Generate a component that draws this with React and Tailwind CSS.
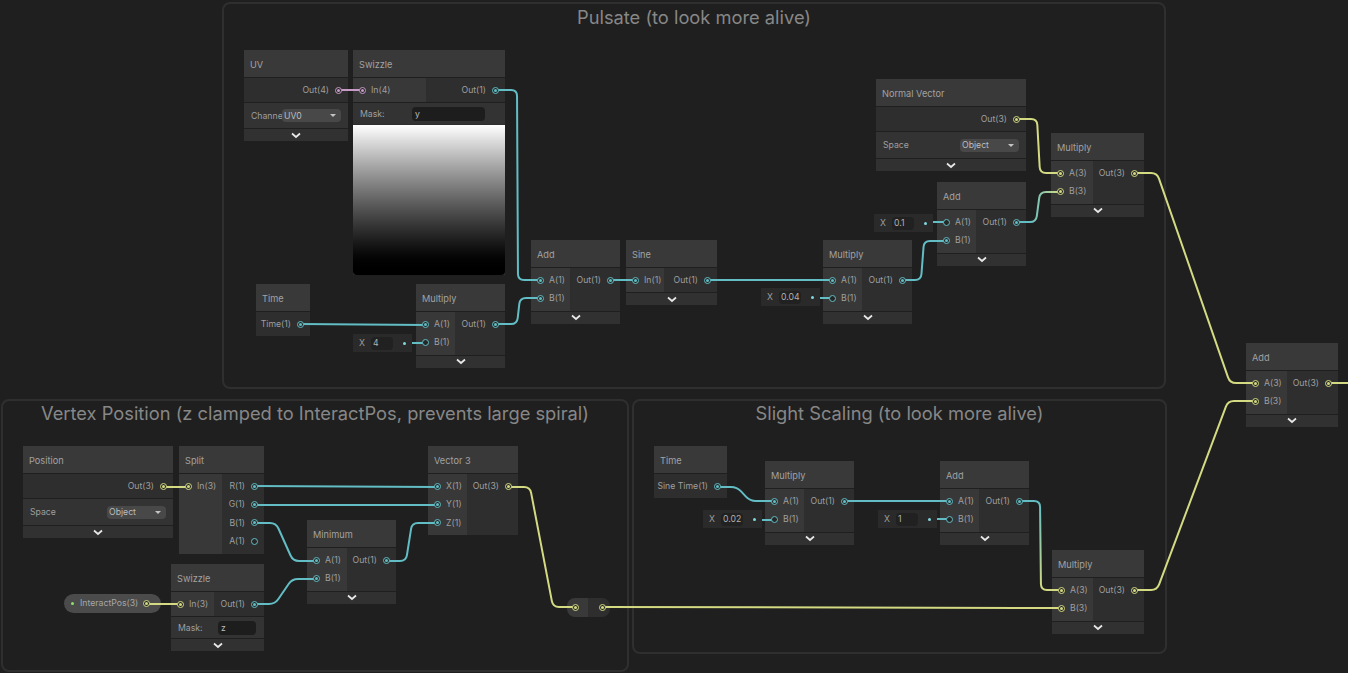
const CYAN = "#62bdc4";
const YELLOW = "#d3da82";
const PINK = "#c79ac8";

function roundedPath(points, r = 6) {
  let d = `M${points[0][0]} ${points[0][1]}`;
  for (let i = 1; i < points.length - 1; i++) {
    const [px, py] = points[i - 1];
    const [x, y] = points[i];
    const [nx, ny] = points[i + 1];
    const l1 = Math.hypot(x - px, y - py);
    const l2 = Math.hypot(nx - x, ny - y);
    const a = Math.min(r, l1 / 2, l2 / 2);
    d += ` L${x - ((x - px) / l1) * a} ${y - ((y - py) / l1) * a}`;
    d += ` Q${x} ${y} ${x + ((nx - x) / l2) * a} ${y + ((ny - y) / l2) * a}`;
  }
  const last = points[points.length - 1];
  return `${d} L${last[0]} ${last[1]}`;
}

const wires = [
  { c: CYAN, p: [[496, 90], [517, 90], [518, 280], [540, 280]] },
  { c: CYAN, p: [[300, 324], [425, 325]] },
  { c: CYAN, p: [[412, 343], [425, 343]] },
  { c: CYAN, p: [[496, 324], [517, 324], [520, 298], [540, 298]] },
  { c: CYAN, p: [[611, 280], [635, 280]] },
  { c: CYAN, p: [[708, 280], [832, 280]] },
  { c: CYAN, p: [[820, 298], [832, 298]] },
  { c: CYAN, p: [[903, 280], [921, 280], [924, 241], [946, 241]] },
  { c: CYAN, p: [[933, 222], [946, 222]] },
  { c: "url(#cyanYellowA)", p: [[1017, 222], [1036, 222], [1040, 192], [1060, 192]] },
  { c: YELLOW, p: [[1017, 119], [1037, 119], [1040, 173], [1060, 173]] },
  { c: YELLOW, p: [[1134, 173], [1157, 173], [1230, 383], [1255, 383]] },
  { c: YELLOW, p: [[1329, 383], [1348, 383]] },
  { c: YELLOW, p: [[163, 487], [187, 487]] },
  { c: CYAN, p: [[254, 486], [437, 487]] },
  { c: CYAN, p: [[254, 505], [437, 505]] },
  { c: CYAN, p: [[254, 523], [276, 523], [293, 561], [315, 561]] },
  { c: YELLOW, p: [[146, 604], [180, 604]] },
  { c: CYAN, p: [[255, 604], [275, 604], [292, 579], [315, 579]] },
  { c: CYAN, p: [[387, 561], [406, 561], [412, 523], [437, 523]] },
  { c: YELLOW, p: [[509, 487], [530, 487], [553, 607], [575, 607]] },
  { c: YELLOW, p: [[603, 607], [1061, 608]] },
  { c: CYAN, p: [[717, 487], [737, 487], [750, 501], [774, 501]] },
  { c: CYAN, p: [[762, 520], [774, 520]] },
  { c: CYAN, p: [[845, 501], [949, 501]] },
  { c: CYAN, p: [[937, 519], [949, 519]] },
  { c: "url(#cyanYellowB)", p: [[1019, 501], [1040, 501], [1041, 590], [1061, 590]] },
  { c: YELLOW, p: [[1135, 590], [1157, 590], [1228, 401], [1255, 401]] },
  { c: PINK, p: [[338, 90], [362, 90]] },
];

function Port({ color, hollow }) {
  return (
    <span
      className="relative z-20 flex h-[7px] w-[7px] shrink-0 items-center justify-center rounded-full border bg-[#262626]"
      style={{ borderColor: color }}
    >
      {!hollow && <span className="h-[3px] w-[3px] rounded-full" style={{ backgroundColor: color }} />}
    </span>
  );
}

function Chevron() {
  return (
    <div className="flex h-[13px] items-center justify-center border-t border-[#1f1f1f] bg-[#313131]">
      <svg width="10" height="7" viewBox="0 0 10 7" fill="none">
        <path d="M1 1.5 L5 5 L9 1.5" stroke="#e8e8e8" strokeWidth="1.7" />
      </svg>
    </div>
  );
}

function Dropdown({ label }) {
  return (
    <div className="flex h-[13px] w-[59px] items-center justify-between rounded-sm bg-[#484848] pl-[2px] pr-[5px] text-[#bdbdbd]">
      <span>{label}</span>
      <span className="h-0 w-0 border-x-[3.5px] border-t-[3.5px] border-x-transparent border-t-[#c4c4c4]" />
    </div>
  );
}

function Node({ x, y, w, title, leftW, inputs = [], outputs = [], chevron = true, children }) {
  const rows = Math.max(inputs.length, outputs.length);
  return (
    <div className="absolute bg-[#2e2e2e] text-[8.7px] leading-none text-[#9f9f9f]" style={{ left: x, top: y, width: w }}>
      <div className="flex h-[27px] items-center bg-[#393939] pl-[6px] pt-[2px] text-[9.2px] text-[#a2a2a2]">{title}</div>
      <div className="flex border-t border-[#1f1f1f]">
        {inputs.length > 0 && (
          <div className="flex flex-col bg-[#383838] pb-[3px] pl-[6px] pt-[3px]" style={{ width: leftW }}>
            {inputs.map((p) => (
              <div key={p.label} className="flex h-[18.4px] items-center gap-[5px]">
                <Port color={p.color} hollow={p.hollow} />
                <span className="whitespace-nowrap">{p.label}</span>
              </div>
            ))}
          </div>
        )}
        <div className="flex flex-1 flex-col items-end pb-[3px] pr-[6px] pt-[3px]" style={{ minHeight: rows * 18.4 + 6 }}>
          {outputs.map((p) => (
            <div key={p.label} className="flex h-[18.4px] items-center gap-[6px]">
              <span className="whitespace-nowrap">{p.label}</span>
              <Port color={p.color} hollow={p.hollow} />
            </div>
          ))}
        </div>
      </div>
      {children}
      {chevron && <Chevron />}
    </div>
  );
}

function SpaceRow() {
  return (
    <div className="flex h-[27px] items-center justify-between border-t border-[#1f1f1f] bg-[#333333] pl-[7px] pr-[7px]">
      <span>Space</span>
      <Dropdown label="Object" />
    </div>
  );
}

function MaskRow({ value, fieldW, right }) {
  return (
    <div className="flex h-[22px] items-center justify-between border-t border-[#1f1f1f] bg-[#333333] pl-[7px]" style={{ paddingRight: right }}>
      <span>Mask:</span>
      <span className="flex h-[14px] items-center rounded-sm bg-[#1d1d1d] pl-[3px] text-[#bdbdbd]" style={{ width: fieldW }}>
        {value}
      </span>
    </div>
  );
}

function ValueInput({ x, y, value }) {
  return (
    <div className="absolute flex h-[18px] w-[59px] items-center bg-[#2a2a2a] text-[8.7px] leading-none text-[#9f9f9f]" style={{ left: x, top: y }}>
      <span className="w-[18px] text-center">X</span>
      <span className="flex h-[13px] w-[22px] items-center rounded-sm bg-[#212121] pl-[2px] text-[#b0b0b0]">{value}</span>
      <span className="relative z-20 ml-[10px] h-[3px] w-[3px] rounded-full bg-[#7fd8de]" />
    </div>
  );
}

function Group({ x, y, w, h, title, titleTop }) {
  return (
    <div className="absolute rounded-lg border-2 border-[#2f2f2f] text-center text-[18.3px] leading-none text-[#878787]" style={{ left: x, top: y, width: w, height: h, paddingTop: titleTop }}>
      {title}
    </div>
  );
}

const c1 = (label, hollow) => ({ label, color: CYAN, hollow });
const y3 = (label) => ({ label, color: YELLOW });

export default function App() {
  return (
    <div className="relative h-[673px] w-[1348px] overflow-hidden bg-[#1f1f1f] font-['Inter',sans-serif]">
      <Group x={222} y={2} w={944} h={387} title="Pulsate (to look more alive)" titleTop={4} />
      <Group x={1} y={399} w={628} h={273} title="Vertex Position (z clamped to InteractPos, prevents large spiral)" titleTop={3} />
      <Group x={632} y={399} w={535} h={255} title="Slight Scaling (to look more alive)" titleTop={3} />

      <Node x={244} y={50} w={104} title="UV" outputs={[{ label: "Out(4)", color: PINK }]}>
        <div className="flex h-[26px] items-center border-t border-[#1f1f1f] bg-[#333333] pl-[7px]">
          <span className="w-[31px] whitespace-nowrap">Channe</span>
          <Dropdown label="UV0" />
        </div>
      </Node>

      <Node x={353} y={50} w={152} title="Swizzle" leftW={73} inputs={[{ label: "In(4)", color: PINK }]} outputs={[c1("Out(1)")]} chevron={false}>
        <MaskRow value="y" fieldW={73} right={20} />
        <div className="mt-[1px] h-[150px] rounded-b-sm bg-gradient-to-b from-white to-black" />
      </Node>

      <Node x={256} y={284} w={54} title="Time" outputs={[c1("Time(1)")]} chevron={false} />
      <Node x={416} y={284} w={89} title="Multiply" leftW={39} inputs={[c1("A(1)"), c1("B(1)", true)]} outputs={[c1("Out(1)")]} />
      <ValueInput x={353} y={334} value="4" />

      <Node x={531} y={240} w={89} title="Add" leftW={39} inputs={[c1("A(1)"), c1("B(1)")]} outputs={[c1("Out(1)")]} />
      <Node x={626} y={240} w={91} title="Sine" leftW={38} inputs={[c1("In(1)")]} outputs={[c1("Out(1)")]} />
      <Node x={823} y={240} w={89} title="Multiply" leftW={39} inputs={[c1("A(1)"), c1("B(1)", true)]} outputs={[c1("Out(1)")]} />
      <ValueInput x={761} y={288} value="0.04" />

      <Node x={876} y={79} w={150} title="Normal Vector" outputs={[y3("Out(3)")]}>
        <SpaceRow />
      </Node>
      <Node x={937} y={182} w={89} title="Add" leftW={39} inputs={[c1("A(1)", true), c1("B(1)")]} outputs={[c1("Out(1)")]} />
      <ValueInput x={874} y={214} value="0.1" />
      <Node x={1051} y={133} w={93} title="Multiply" leftW={42} inputs={[y3("A(3)"), y3("B(3)")]} outputs={[y3("Out(3)")]} />
      <Node x={1246} y={343} w={92} title="Add" leftW={41} inputs={[y3("A(3)"), y3("B(3)")]} outputs={[y3("Out(3)")]} />

      <Node x={23} y={446} w={150} title="Position" outputs={[y3("Out(3)")]}>
        <SpaceRow />
      </Node>
      <Node x={179} y={446} w={85} title="Split" leftW={43} inputs={[y3("In(3)")]} outputs={[c1("R(1)"), c1("G(1)"), c1("B(1)"), c1("A(1)", true)]} chevron={false} />
      <Node x={428} y={446} w={90} title="Vector 3" leftW={39} inputs={[c1("X(1)"), c1("Y(1)"), c1("Z(1)")]} outputs={[y3("Out(3)")]} chevron={false} />
      <Node x={307} y={520} w={89} title="Minimum" leftW={40} inputs={[c1("A(1)"), c1("B(1)")]} outputs={[c1("Out(1)")]} />
      <Node x={171} y={564} w={93} title="Swizzle" leftW={43} inputs={[y3("In(3)")]} outputs={[c1("Out(1)")]}>
        <MaskRow value="z" fieldW={38} right={8} />
      </Node>

      <div className="absolute left-[64px] top-[594px] flex h-[19px] w-[97px] items-center rounded-full bg-[#4b4b4b] pl-[7px] pr-[11px] text-[8.7px] leading-none text-[#a6a6a6]">
        <span className="h-[3px] w-[3px] rounded-full bg-[#8fe06a]" />
        <span className="ml-[6px] flex-1 whitespace-nowrap">InteractPos(3)</span>
        <Port color={YELLOW} />
      </div>

      <div className="absolute left-[567px] top-[598px] flex h-[19px] w-[43px] overflow-hidden rounded-lg">
        <div className="flex w-[21px] items-center bg-[#393939] pl-[5px]">
          <Port color={YELLOW} />
        </div>
        <div className="flex flex-1 items-center justify-end bg-[#2e2e2e] pr-[4px]">
          <Port color={YELLOW} />
        </div>
      </div>

      <Node x={654} y={446} w={73} title="Time" outputs={[c1("Sine Time(1)")]} chevron={false} />
      <Node x={765} y={461} w={89} title="Multiply" leftW={39} inputs={[c1("A(1)"), c1("B(1)", true)]} outputs={[c1("Out(1)")]} />
      <ValueInput x={703} y={510} value="0.02" />
      <Node x={940} y={461} w={89} title="Add" leftW={39} inputs={[c1("A(1)"), c1("B(1)", true)]} outputs={[c1("Out(1)")]} />
      <ValueInput x={878} y={510} value="1" />
      <Node x={1052} y={550} w={92} title="Multiply" leftW={41} inputs={[y3("A(3)"), y3("B(3)")]} outputs={[y3("Out(3)")]} />

      <svg className="pointer-events-none absolute left-0 top-0 z-10" width="1348" height="673" fill="none">
        <defs>
          <linearGradient id="cyanYellowA" gradientUnits="userSpaceOnUse" x1="1017" y1="0" x2="1060" y2="0">
            <stop offset="0.3" stopColor={CYAN} />
            <stop offset="1" stopColor={YELLOW} />
          </linearGradient>
          <linearGradient id="cyanYellowB" gradientUnits="userSpaceOnUse" x1="0" y1="501" x2="0" y2="590">
            <stop offset="0" stopColor={CYAN} />
            <stop offset="1" stopColor={YELLOW} />
          </linearGradient>
        </defs>
        {wires.map((w, i) => (
          <path key={i} d={roundedPath(w.p)} stroke={w.c} strokeWidth="2" />
        ))}
      </svg>
    </div>
  );
}
